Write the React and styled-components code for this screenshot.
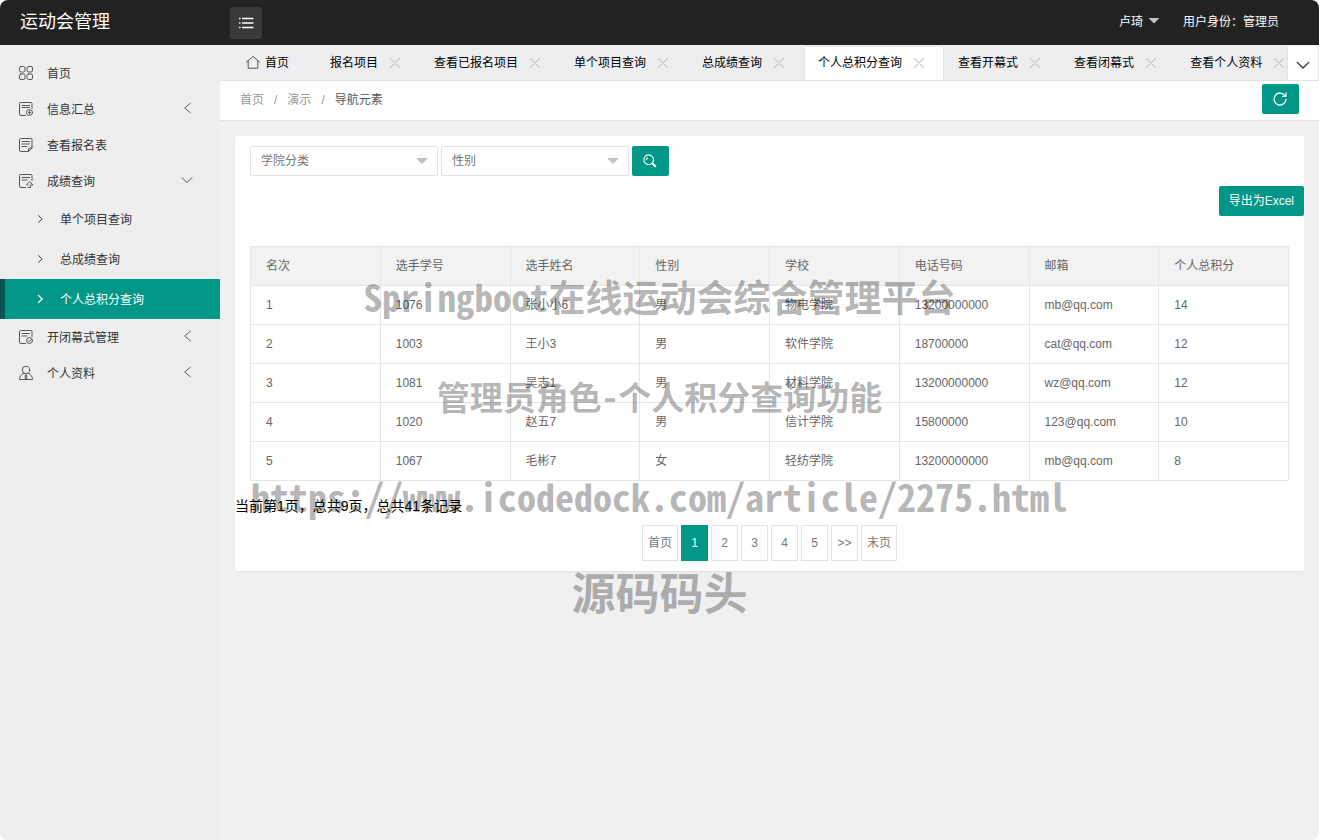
import React from "react";
import styled, { createGlobalStyle } from "styled-components";

const GlobalStyle = createGlobalStyle`
  *, *::before, *::after { box-sizing: border-box; }
  body {
    margin: 0;
    background: #fff;
    color: #333;
    font: 12px/20px "Liberation Sans", "Noto Sans CJK SC", sans-serif;
  }
  button, select { font: inherit; }
  button { cursor: pointer; }
  a { color: inherit; text-decoration: none; }
`;

const Page = styled.div`
  position: relative;
  display: flex;
  flex-direction: column;
  min-height: 100vh;
  overflow: hidden;
  border-radius: 8px;
  background: #f0f0f0;
`;

const Header = styled.header`
  display: flex;
  align-items: center;
  height: 45px;
  padding: 0 40px 0 20px;
  background: #222;
  color: #fff;
`;

const Brand = styled.h1`
  width: 210px;
  height: 45px;
  margin: 0;
  font-size: 18px;
  font-weight: 400;
  line-height: 44px;
`;

const MenuButton = styled.button`
  display: flex;
  align-items: center;
  justify-content: center;
  width: 32px;
  height: 32px;
  padding: 0;
  border: 0;
  border-radius: 3px;
  background: #393939;
  color: #fff;
`;

const UserArea = styled.div`
  display: flex;
  gap: 23px;
  height: 45px;
  margin-left: auto;
  line-height: 45px;
`;

const UserButton = styled.button`
  display: flex;
  align-items: center;
  gap: 5px;
  height: 45px;
  padding: 0;
  border: 0;
  background: none;
  color: #fff;
`;

const Caret = styled.span`
  width: 12px;
  height: 6px;
  background: #c2c2c2;
  clip-path: polygon(0 0, 100% 0, 50% 100%);
`;

const UserCaret = styled(Caret)`
  margin-bottom: 4px;
`;

const Body = styled.div`
  display: flex;
  flex: 1;
`;

const Sidebar = styled.nav`
  flex: none;
  width: 220px;
  padding: 10px 0;
  background: #eee;
`;

const MenuText = styled.span`
  padding-top: 2px;
`;

const MenuLink = styled.a`
  display: grid;
  grid-template-columns: 16px 1fr 12px;
  gap: 13px;
  align-items: center;
  height: 36px;
  padding: 0 27px 0 18px;
  color: #333;

  svg { color: #555; }
  svg:last-child { margin-bottom: 2px; }
`;

const SubLink = styled.a`
  display: flex;
  align-items: center;
  gap: 15px;
  height: 40px;
  padding-left: 30px;
  border-left: 5px solid ${(p) => (p.$active ? "#04564e" : "transparent")};
  background: ${(p) => (p.$active ? "#009688" : "transparent")};
  color: ${(p) => (p.$active ? "#fff" : "#333")};
`;

const Main = styled.main`
  flex: 1;
  min-width: 0;
`;

const TabBar = styled.div`
  display: flex;
  height: 36px;
  padding-left: 12px;
  border-bottom: 1px solid #e2e2e2;
  background: #eeeef0;
`;

const TabList = styled.div`
  display: flex;
  flex: 1;
  min-width: 0;
  padding-top: 1px;
  overflow: hidden;
`;

const Tab = styled.div`
  display: flex;
  flex: none;
  align-items: center;
  gap: 12px;
  padding: 0 19px 0 14px;
  background: ${(p) => (p.$active ? "#fff" : "transparent")};
  border-right: 1px solid ${(p) => (p.$active ? "#e2e2e2" : "transparent")};
  box-shadow: ${(p) => (p.$active ? "inset 1px 1px #e6e6e6" : "none")};
  color: #000;
`;

const HomeTab = styled(Tab)`
  gap: 5px;
  padding-right: 26px;

  svg { color: #444; }
`;

const CloseButton = styled.button`
  display: flex;
  padding: 0;
  border: 0;
  background: none;
  color: #c2c2c2;
`;

const TabMenu = styled.button`
  display: flex;
  flex: none;
  align-items: center;
  justify-content: center;
  width: 32px;
  margin-top: 1px;
  padding: 4px 0 0;
  border: 1px solid #e2e2e2;
  border-width: 0 1px;
  background: #fff;
  color: #333;
`;

const CrumbBar = styled.div`
  display: flex;
  align-items: center;
  justify-content: space-between;
  height: 40px;
  padding: 0 20px 3px;
  border-bottom: 1px solid #e2e2e2;
  background: #fff;
`;

const Crumbs = styled.nav`
  display: flex;
  gap: 10px;
  padding-top: 2px;
  color: #999;

  [aria-current] { color: #555; }
`;

const Button = styled.button`
  display: flex;
  align-items: center;
  justify-content: center;
  height: 30px;
  padding: 0 10px;
  border: 0;
  border-radius: 2px;
  background: #009688;
  color: #fff;
`;

const IconButton = styled(Button)`
  width: 37px;
  padding: 0 2px 0 0;
`;

const Card = styled.section`
  margin: 15px;
  padding: 10px 0;
  border-radius: 2px;
  background: #fff;
  box-shadow: 0 1px 2px rgba(0, 0, 0, 0.06);
`;

const FilterRow = styled.form`
  display: flex;
  gap: 3px;
  padding: 0 15px;
`;

const SelectBox = styled.label`
  display: grid;
  grid-template-columns: 1fr 21px;
  align-items: center;
  width: 188px;
  height: 30px;
  border: 1px solid #e2e2e2;
  border-radius: 2px;

  select {
    grid-area: 1 / 1 / 2 / 3;
    width: 100%;
    height: 28px;
    padding: 0 10px;
    border: 0;
    appearance: none;
    background: transparent;
    color: #757575;
  }
  span { grid-area: 1 / 2; }
`;

const ExportRow = styled.div`
  display: flex;
  justify-content: flex-end;
  margin: 10px 0 30px;
`;

const TableWrap = styled.div`
  padding: 0 15px;
`;

const Table = styled.table`
  width: 100%;
  border-collapse: collapse;
  table-layout: fixed;
  color: #666;

  th, td {
    height: 39px;
    padding: 0 15px;
    border: 1px solid #e6e6e6;
    font-weight: 400;
    text-align: left;
  }
  th { background: #f2f2f2; }
`;

const Summary = styled.p`
  margin: 15px 0 9px;
  color: #000;
  font-size: 14px;
`;

const Pager = styled.nav`
  display: flex;
  justify-content: center;
  gap: 3px;
`;

const PageLink = styled.a`
  display: flex;
  align-items: center;
  justify-content: center;
  width: ${(p) => (p.$wide ? 36 : 27)}px;
  height: 36px;
  border: 1px solid ${(p) => (p.$active ? "#009688" : "#e2e2e2")};
  background: ${(p) => (p.$active ? "#009688" : "#fff")};
  color: ${(p) => (p.$active ? "#fff" : "#777")};
`;

const Watermark = styled.div`
  position: absolute;
  top: 271px;
  left: 0;
  right: 0;
  display: flex;
  flex-direction: column;
  align-items: center;
  gap: 50px;
  pointer-events: none;
  color: rgba(0, 0, 0, 0.3);
  font-family: "Noto Sans CJK SC", sans-serif;
  font-feature-settings: "hwid";
  font-weight: 700;
  white-space: nowrap;
`;

const MarkLine = styled.div`
  font-size: ${(p) => p.$size}px;
  line-height: ${(p) => p.$line || 50}px;
`;

function Icon({ size = 16, width = 1, children }) {
  return (
    <svg width={size} height={size} viewBox="0 0 16 16" fill="none" stroke="currentColor"
      strokeWidth={width} strokeLinecap="round" strokeLinejoin="round" aria-hidden="true">
      {children}
    </svg>
  );
}

const sheet = "M7.500 14.500H3A1.500 1.500 0 0 1 1.500 13V2.500A1 1 0 0 1 2.500 1.500H13A1 1 0 0 1 14 2.500V7.500";
const drawings = {
  grid: (
    <>
      <rect x="1.500" y="1.500" width="5.500" height="5.500" rx="1.500" />
      <rect x="9" y="1.500" width="5.500" height="5.500" rx="1.500" />
      <rect x="1.500" y="9" width="5.500" height="5.500" rx="1.500" />
      <rect x="9" y="9" width="5.500" height="5.500" rx="1.500" />
    </>
  ),
  info: <><path d={sheet} /><path d="M4 4.500h7.500M4 6.500h7.500" /><circle cx="11.500" cy="11.500" r="3" /><path d="M11.500 10v3M10.500 11.500h2" /></>,
  form: <><path d="M10 14.500H3A1.500 1.500 0 0 1 1.500 13V2.500a1 1 0 0 1 1-1H13a1 1 0 0 1 1 1V11l-3.500 3.500V12a1 1 0 0 1 1-1H14" /><path d="M4 4.500h7.500M4 7h7.500M4 9.500h5" /></>,
  score: <><path d={sheet} /><path d="M4 4.500h7.500M4 7h5M10 14.500h2.500V12h2.500L11.700 8.500 8.500 12h1.500" /></>,
  ceremony: <><path d={sheet} /><path d="M4 4.500h7.500M4 7h5" /><circle cx="11.500" cy="11.500" r="3" /><path d="M10 11.500l1.200 1.200 2.300-2.400" /></>,
  person: <><circle cx="8" cy="5" r="3.700" /><path d="M5.800 8.200C3 9.500 1.500 11.500 1.500 14.500h13c0-3-1.500-5-4.300-6.300M7.500 10L7 13l1 1 1-1-.5-3" /></>,
};

const Chevron = ({ dir, size = 12, width = 1.3 }) => (
  <Icon size={size} width={width}>
    <path d={{ left: "M12.500 1.500L5 8l7.500 6.500", right: "M5.500 2.500l6 5.500-6 5.500", down: "M1.500 5L8 11.500 14.500 5" }[dir]} />
  </Icon>
);

const menu = [
  { label: "首页", icon: "grid" },
  { label: "信息汇总", icon: "info", arrow: "left" },
  { label: "查看报名表", icon: "form" },
  { label: "成绩查询", icon: "score", arrow: "down", items: ["单个项目查询", "总成绩查询", "个人总积分查询"] },
  { label: "开闭幕式管理", icon: "ceremony", arrow: "left" },
  { label: "个人资料", icon: "person", arrow: "left" },
];
const current = "个人总积分查询";
const tabs = ["报名项目", "查看已报名项目", "单个项目查询", "总成绩查询", current, "查看开幕式", "查看闭幕式", "查看个人资料"];
const columns = ["名次", "选手学号", "选手姓名", "性别", "学校", "电话号码", "邮箱", "个人总积分"];
const rows = [
  ["1", "1076", "张小小6", "男", "物电学院", "13200000000", "mb@qq.com", "14"],
  ["2", "1003", "王小3", "男", "软件学院", "18700000", "cat@qq.com", "12"],
  ["3", "1081", "吴志1", "男", "材料学院", "13200000000", "wz@qq.com", "12"],
  ["4", "1020", "赵五7", "男", "信计学院", "15800000", "123@qq.com", "10"],
  ["5", "1067", "毛彬7", "女", "轻纺学院", "13200000000", "mb@qq.com", "8"],
];
const pages = ["首页", "1", "2", "3", "4", "5", ">>", "末页"];

function Filter({ label }) {
  return (
    <SelectBox>
      <select aria-label={label} defaultValue="">
        <option value="">{label}</option>
      </select>
      <Caret />
    </SelectBox>
  );
}

export default function App() {
  return (
    <Page>
      <GlobalStyle />
      <Header>
        <Brand>运动会管理</Brand>
        <MenuButton type="button" aria-label="菜单">
          <Icon width={1.3}>
            <path d="M4.500 3.500h10.500M4.500 8h10.500M4.500 12.500h10.500M1.500 3.500h.5M1.500 8h.5M1.500 12.500h.5" />
          </Icon>
        </MenuButton>
        <UserArea>
          <UserButton type="button">卢琦<UserCaret /></UserButton>
          <span>用户身份：管理员</span>
        </UserArea>
      </Header>
      <Body>
        <Sidebar>
          {menu.map((m) => (
            <React.Fragment key={m.label}>
              <MenuLink href="#">
                <Icon>{drawings[m.icon]}</Icon>
                <MenuText>{m.label}</MenuText>
                {m.arrow && <Chevron dir={m.arrow} />}
              </MenuLink>
              {m.items?.map((s) => (
                <SubLink href="#" key={s} $active={s === current}>
                  <Chevron dir="right" size={10} width={s === current ? 2.2 : 1.4} />
                  <MenuText>{s}</MenuText>
                </SubLink>
              ))}
            </React.Fragment>
          ))}
        </Sidebar>
        <Main>
          <TabBar>
            <TabList>
              <HomeTab>
                <Icon size={14}><path d="M.5 7L8 .5l7.500 6.500M2.500 5.500v8.500h11V5.500" /></Icon>
                首页
              </HomeTab>
              {tabs.map((t) => (
                <Tab key={t} $active={t === current}>
                  {t}
                  <CloseButton type="button" aria-label={`关闭${t}`}>
                    <Icon size={10} width={1.8}><path d="M1 1l14 14M15 1L1 15" /></Icon>
                  </CloseButton>
                </Tab>
              ))}
            </TabList>
            <TabMenu type="button" aria-label="更多标签"><Chevron dir="down" size={14} width={1.6} /></TabMenu>
          </TabBar>
          <CrumbBar>
            <Crumbs aria-label="导航">
              <a href="#">首页</a><span>/</span><a href="#">演示</a><span>/</span>
              <span aria-current="page">导航元素</span>
            </Crumbs>
            <IconButton type="button" aria-label="刷新">
              <Icon size={16} width={1.3}><path d="M13.200 5A6 6 0 1 0 14 8.500M14 1.800v3.500h-3.500" /></Icon>
            </IconButton>
          </CrumbBar>
          <Card>
            <FilterRow>
              <Filter label="学院分类" />
              <Filter label="性别" />
              <IconButton type="button" aria-label="搜索">
                <Icon size={14} width={1.3}>
                  <circle cx="6.500" cy="6.500" r="5.500" />
                  <path d="M4 6.500A2.500 2.500 0 0 1 5 4.500" />
                  <path d="M11.500 11.500l2.500 2.500" strokeWidth="2.500" />
                </Icon>
              </IconButton>
            </FilterRow>
            <ExportRow>
              <Button type="button">导出为Excel</Button>
            </ExportRow>
            <TableWrap>
              <Table>
                <thead>
                  <tr>{columns.map((c) => <th key={c} scope="col">{c}</th>)}</tr>
                </thead>
                <tbody>
                  {rows.map((r) => (
                    <tr key={r[0]}>{r.map((v, i) => <td key={columns[i]}>{v}</td>)}</tr>
                  ))}
                </tbody>
              </Table>
            </TableWrap>
            <Summary>当前第1页，总共9页，总共41条记录</Summary>
            <Pager aria-label="分页">
              {pages.map((p) => (
                <PageLink href="#" key={p} $wide={p.endsWith("页")} $active={p === "1"}>{p}</PageLink>
              ))}
            </Pager>
          </Card>
        </Main>
      </Body>
      <Watermark aria-hidden="true">
        <MarkLine $size={37}>Springboot在线运动会综合管理平台</MarkLine>
        <MarkLine $size={33}>管理员角色-个人积分查询功能</MarkLine>
        <MarkLine $size={38}>https://www.icodedock.com/article/2275.html</MarkLine>
        <MarkLine $size={44} $line={40}>源码码头</MarkLine>
      </Watermark>
    </Page>
  );
}
